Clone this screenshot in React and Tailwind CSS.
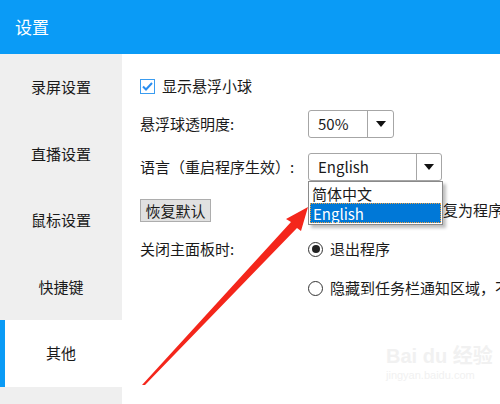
import { useState } from 'react';

const font = { fontFamily: '"Noto Sans CJK SC", "Noto Sans", sans-serif' };

function Caret() {
  return (
    <svg width="10" height="6" viewBox="0 0 10 6" className="block">
      <path d="M0 0h10L5 6z" fill="#111" />
    </svg>
  );
}

function Select({ value, width, arrowW }) {
  return (
    <div className={`h-[28px] ${width} shrink-0 flex bg-white border border-[#a6a6a6] rounded-[3px]`}>
      <div className="flex-1 flex items-center pl-[9px] text-[15px] text-[#1a1a1a]">{value}</div>
      <div className={`${arrowW} border-l border-[#a6a6a6] flex items-center justify-center`}>
        <Caret />
      </div>
    </div>
  );
}

export default function App() {
  const [active] = useState('其他');
  const menu = ['录屏设置', '直播设置', '鼠标设置', '快捷键', '其他'];

  return (
    <div className="relative w-[500px] h-[404px] overflow-hidden bg-white flex flex-col" style={font}>
      {/* Title bar */}
      <header className="h-[54px] shrink-0 bg-[#0a9bf6] flex items-center pl-[15px] text-white text-[17px]">设置</header>

      <div className="flex-1 flex min-h-0">
        {/* Sidebar */}
        <aside className="w-[122px] shrink-0 bg-[#efefef] flex flex-col">
          {menu.map((m) => (
            <div
              key={m}
              className={`relative h-[66.6px] flex items-center justify-center text-[15px] text-[#1a1a1a] whitespace-nowrap ${m === active ? 'bg-white' : ''}`}
            >
              {m === active && <span className="absolute left-0 top-0 bottom-0 w-[5px] bg-[#0a9bf6]" />}
              {m}
            </div>
          ))}
        </aside>

        {/* Content */}
        <main className="flex-1 min-w-0 overflow-hidden flex flex-col pl-[18px] pt-[16px] text-[15px] text-[#1a1a1a] whitespace-nowrap">
          <div className="h-[32px] flex items-center gap-[7px]">
            <span className="w-[15px] h-[15px] shrink-0 border border-[#3a9cf0] bg-white flex items-center justify-center">
              <svg width="11" height="9" viewBox="0 0 11 9">
                <path d="M1 4.5l3 3L10 1" fill="none" stroke="#2a8ef0" strokeWidth="2" />
              </svg>
            </span>
            显示悬浮小球
          </div>

          <div className="mt-[8px] h-[28px] flex items-center">
            <span className="w-[168px] shrink-0">悬浮球透明度:</span>
            <Select value="50%" width="w-[86px]" arrowW="w-[26px]" />
          </div>

          <div className="mt-[15px] h-[28px] flex items-center">
            <span className="w-[168px] shrink-0">语言（重启程序生效）:</span>
            <div className="relative shrink-0">
              <Select value="English" width="w-[134px]" arrowW="w-[25px]" />
              {/* Open dropdown list */}
              <div className="absolute z-10 left-0 top-[28px] w-[135px] bg-white border border-[#8a8a8a] shadow-[3px_3px_3px_rgba(0,0,0,0.25)] flex flex-col p-[1px]">
                <div className="h-[20px] flex items-center pl-[2px] leading-none">简体中文</div>
                <div className="h-[20px] flex items-center pl-[2px] bg-[#0078d7] text-white border border-dotted border-[#f0a040] leading-none">English</div>
              </div>
            </div>
          </div>

          <div className="mt-[18px] h-[23px] flex items-center">
            <button className="h-[23px] w-[71px] shrink-0 bg-[#e1e1e1] border border-[#adadad] text-[15px] text-[#1a1a1a] leading-none">恢复默认</button>
            <span className="ml-[97px] shrink-0">将当前所有设置都恢复为程序默认值</span>
          </div>

          <div className="mt-[15px] h-[24px] flex items-center">
            <span className="w-[168px] shrink-0">关闭主面板时:</span>
            <span className="w-[15px] h-[15px] shrink-0 rounded-full border border-[#333] flex items-center justify-center">
              <span className="w-[8px] h-[8px] rounded-full bg-[#222]" />
            </span>
            <span className="ml-[7px]">退出程序</span>
          </div>

          <div className="mt-[15px] h-[24px] flex items-center">
            <span className="w-[168px] shrink-0" />
            <span className="w-[15px] h-[15px] shrink-0 rounded-full border border-[#333] bg-white" />
            <span className="ml-[7px] shrink-0">隐藏到任务栏通知区域，不退出程序</span>
          </div>

          {/* watermark */}
          <div className="mt-[46px] ml-[246px] flex flex-col items-start text-[#f1f1f1] leading-none">
            <span className="text-[20px] font-bold" style={{ fontFamily: '"Liberation Sans", "Noto Sans CJK SC", sans-serif' }}>Bai du 经验</span>
            <span className="mt-[4px] text-[11px]" style={{ fontFamily: '"Liberation Sans", sans-serif' }}>jingyan.baidu.com</span>
          </div>
        </main>
      </div>

      {/* Red annotation arrow */}
      <svg className="absolute inset-0 pointer-events-none" width="500" height="404" viewBox="0 0 500 404">
        <polygon
          points="308,207 286,219 291,222 142,385 145,385 297,228 301,231"
          fill="#f4261b"
        />
      </svg>
    </div>
  );
}
